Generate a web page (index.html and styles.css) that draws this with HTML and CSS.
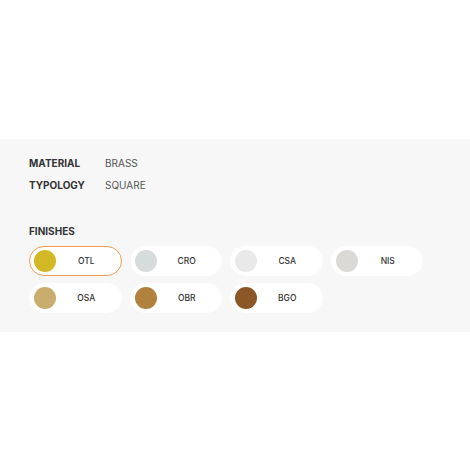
FILE: index.html
```html
<!DOCTYPE html>
<html lang="en">
  <head>
    <meta charset="UTF-8" />
    <meta name="viewport" content="width=device-width, initial-scale=1.0" />
    <title>Product details</title>
    <link rel="stylesheet" href="styles.css">
  </head>
  <body>
    <section class="details">
      <dl class="specs">
        <div class="spec-row">
          <dt>MATERIAL</dt>
          <dd>BRASS</dd>
        </div>
        <div class="spec-row">
          <dt>TYPOLOGY</dt>
          <dd>SQUARE</dd>
        </div>
      </dl>

      <h3 class="finishes-title">FINISHES</h3>
      <div class="finishes">
        <button class="finish active"><span class="swatch otl"></span><span class="code">OTL</span></button>
        <button class="finish"><span class="swatch cro"></span><span class="code">CRO</span></button>
        <button class="finish"><span class="swatch csa"></span><span class="code">CSA</span></button>
        <button class="finish"><span class="swatch nis"></span><span class="code">NIS</span></button>
        <button class="finish"><span class="swatch osa"></span><span class="code">OSA</span></button>
        <button class="finish"><span class="swatch obr"></span><span class="code">OBR</span></button>
        <button class="finish"><span class="swatch bgo"></span><span class="code">BGO</span></button>
      </div>
    </section>
  </body>
</html>
```

FILE: styles.css
```css
* {
  box-sizing: border-box;
}

body {
  margin: 0;
  background-color: #ffffff;
  font-family: Inter, "Liberation Sans", sans-serif;
  color: #333;
}

.details {
  margin-top: 139px;
  background-color: #f7f7f7;
  padding: 13px 47px 19px 29px;
}

.specs {
  margin: 0;
}

.spec-row {
  display: flex;
  line-height: 22px;
}

.spec-row dt {
  width: 76px;
  font-size: 10px;
  font-weight: 700;
  color: #333;
}

.spec-row dd {
  margin: 0;
  font-size: 10px;
  color: #555;
}

.finishes-title {
  margin: 24px 0 4px;
  font-size: 10px;
  line-height: 22px;
  font-weight: 700;
  color: #333;
}

.finishes {
  display: grid;
  grid-template-columns: repeat(4, 1fr);
  gap: 7px 8px;
}

.finish {
  display: flex;
  align-items: center;
  height: 30px;
  padding: 0 4px;
  background-color: #fff;
  border: 1px solid #fff;
  border-radius: 15px;
  font-family: inherit;
  cursor: pointer;
}

.finish.active {
  border-color: #f39a50;
}

.swatch {
  width: 22px;
  height: 22px;
  border-radius: 50%;
  flex-shrink: 0;
}

.code {
  flex: 1;
  text-align: center;
  font-size: 8.5px;
  font-weight: 500;
  color: #333;
}

.otl { background-color: #d3b826; }
.cro { background-color: #d6dcdc; }
.csa { background-color: #e9e9e9; }
.nis { background-color: #dad9d5; }
.osa { background-color: #c8ad6e; }
.obr { background-color: #b0823d; }
.bgo { background-color: #8c5626; }
```
